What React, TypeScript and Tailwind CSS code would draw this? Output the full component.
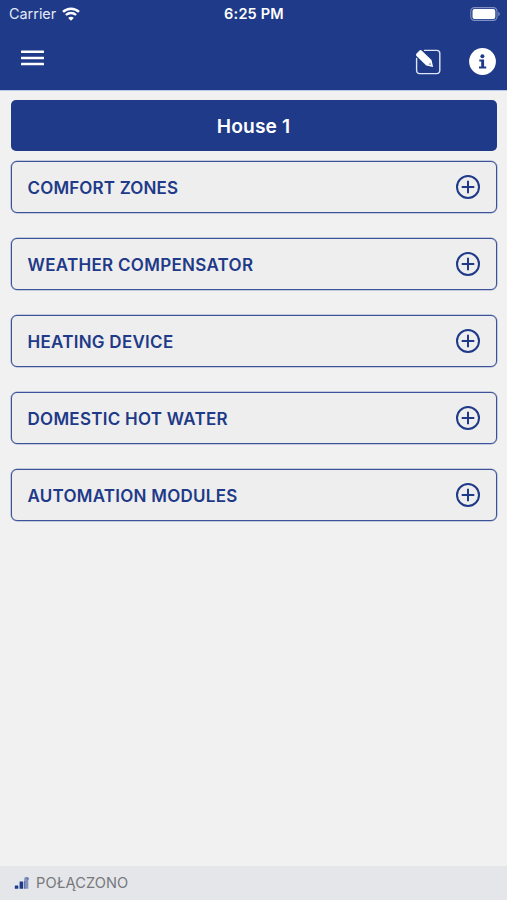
const sections = [
  { id: "zones", label: "COMFORT ZONES", className: "pt-[3px] tracking-[0.15px]" },
  { id: "weather", label: "WEATHER COMPENSATOR", className: "pt-[3px] tracking-[0.3px]" },
  { id: "heating", label: "HEATING DEVICE", className: "pt-[3px] tracking-[0.27px]" },
  { id: "water", label: "DOMESTIC HOT WATER", className: "pt-[3px] tracking-[0.27px]" },
  { id: "modules", label: "AUTOMATION MODULES", className: "pt-[3px] tracking-[0.25px]" },
];

const WifiIcon = () => (
  <svg width="18" height="14" viewBox="0 0 18 14" fill="none">
    <path d="M1 4.9C5.5.7 12.5.7 17 4.9" stroke="white" strokeWidth="2.6" />
    <path d="M3.9 8C6.8 5.3 11.2 5.3 14.1 8" stroke="white" strokeWidth="2.3" />
    <path d="M6.2 10.9C7.8 9.4 10.2 9.4 11.8 10.9L9 13.8Z" fill="white" />
  </svg>
);

const BatteryIcon = () => (
  <svg width="31" height="14" viewBox="0 0 31 14" fill="none">
    <rect x="0.8" y="0.6" width="26.2" height="12.8" rx="3.6" stroke="#8090c2" strokeWidth="1.1" />
    <rect x="2.5" y="2" width="22.8" height="10" rx="2" fill="white" />
    <path d="M28.3 4.8C30.3 5.6 30.3 8.4 28.3 9.2Z" fill="#8090c2" />
  </svg>
);

const EditIcon = () => (
  <svg width="26" height="26" viewBox="0 0 26 26" fill="none">
    <path
      d="M9.5 1.4H21.8a3 3 0 0 1 3 3V21.6a3 3 0 0 1-3 3H4.6a3 3 0 0 1-3-3V9.5"
      stroke="#dfe5f4"
      strokeWidth="1.4"
      strokeLinecap="round"
    />
    <path d="M1.4 4.8L4.5 1.6Q5.7.6 6.9 1.7L16.5 11.1L18.1 18L11.2 16.5L1.5 7.1Q.4 5.9 1.4 4.8Z" fill="white" />
    <path d="M13.2 15.4L15.4 13.2L16.5 16.5Z" fill="#a3b0d5" />
  </svg>
);

const InfoIcon = () => (
  <svg width="27" height="27" viewBox="0 0 27 27">
    <circle cx="13.5" cy="13.5" r="13.4" fill="white" />
    <circle cx="13.4" cy="8.2" r="2" fill="#1e3a88" />
    <path d="M10.3 11.4H15.1V18.5H17.2V20.6H10V18.5H12.2V13.5H10.3Z" fill="#1e3a88" />
  </svg>
);

const PlusIcon = () => (
  <svg width="24" height="24" viewBox="0 0 24 24" fill="none" stroke="#1e3a88" strokeWidth="2">
    <circle cx="12" cy="12" r="11" />
    <path d="M12 5.7V18.3M5.7 12H18.3" />
  </svg>
);

const SignalIcon = () => (
  <svg width="15" height="12" viewBox="0 0 15 12">
    <rect x="0.8" y="8.6" width="3.5" height="3.2" rx="0.4" fill="#1e3a88" />
    <rect x="5.6" y="4.4" width="3.6" height="7.4" rx="0.4" fill="#1e3a88" />
    <rect x="10.3" y="0.4" width="4" height="11.4" rx="0.4" fill="#8492bd" />
    <path d="M10.6 11.8V4M11.5.8H14.1V3" stroke="#3f559b" strokeWidth="0.7" fill="none" />
  </svg>
);

const MenuIcon = () => (
  <svg width="23" height="16" viewBox="0 0 23 16" fill="white">
    <rect y="0.5" width="23" height="2.5" rx="0.4" />
    <rect y="6.7" width="23" height="2.5" rx="0.4" />
    <rect y="12.8" width="23" height="2.5" rx="0.4" />
  </svg>
);

const Header = () => (
  <header className="h-[90px] bg-[#1e3a88] text-white">
    <div className="grid h-7 grid-cols-[1fr_auto_1fr] items-center pl-[9px] pr-[8px]">
      <div className="flex items-center gap-[6px] text-[14.4px] text-[#e4eaf8]">
        <span>Carrier</span>
        <WifiIcon />
      </div>
      <span className="text-center text-[14.5px] font-semibold tracking-[0.2px]">6:25 PM</span>
      <div className="-mr-[2px] -mt-px flex justify-end">
        <BatteryIcon />
      </div>
    </div>
    <div className="flex justify-between pl-[21px] pr-[11px]">
      <button className="mt-[22px] h-4" aria-label="Menu">
        <MenuIcon />
      </button>
      <div className="mt-5 flex items-center gap-[28px]">
        <button aria-label="Edit">
          <EditIcon />
        </button>
        <button aria-label="Info">
          <InfoIcon />
        </button>
      </div>
    </div>
  </header>
);

const App = () => {
  return (
    <div className="flex h-screen flex-col bg-[#f1f1f1] font-['Inter',sans-serif]">
      <Header />
      <main className="flex-1 border-t border-[#b9c7e8] px-[10.5px] pt-[9px]">
        <h1 className="flex h-[51px] items-center justify-center rounded-[5px] bg-[#1e3a88] pt-[2px] text-[19.2px] font-semibold tracking-[0.1px] text-white">
          House 1
        </h1>
        <div className="mt-[10px] flex flex-col gap-[25px]">
          {sections.map((s) => (
            <button
              key={s.id}
              className="flex h-[52px] items-center justify-between rounded-[6px] border border-[#3c529a] bg-[#eeeeee] px-4 text-[17px] font-semibold text-[#1e3a88] shadow-[0_0_0_0.5px_#3c529a80]"
            >
              <span className={s.className}>{s.label}</span>
              <PlusIcon />
            </button>
          ))}
        </div>
      </main>
      <footer className="flex h-[34px] items-center gap-[7px] bg-[#e4e6ea] pl-[14px] text-[14.6px] text-[#77787b]">
        <SignalIcon />
        <span className="pt-[2px] tracking-[0.1px]">POŁĄCZONO</span>
      </footer>
    </div>
  );
};

export default App;
